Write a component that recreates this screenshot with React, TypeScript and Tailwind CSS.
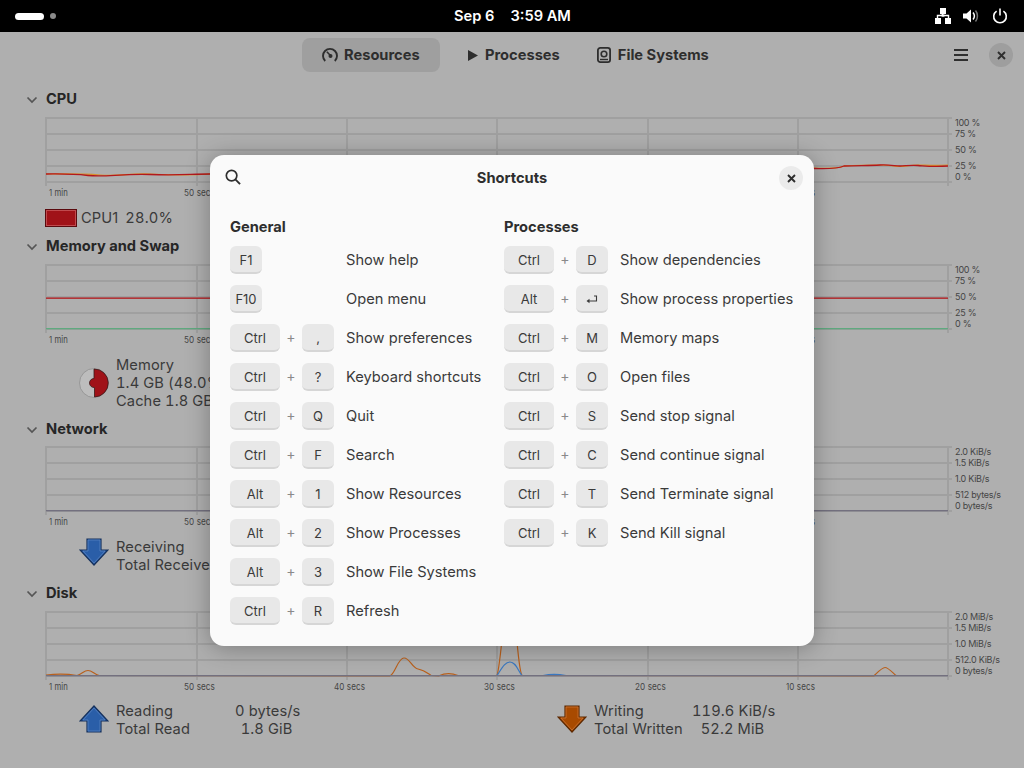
import React from "react";

const GRID = "#a0a0a0";
const VX = [46, 197, 347, 497, 648, 798, 948];
const TIMES: [number, string][] = [[49, "1 min"], [184, "50 secs"], [334, "40 secs"], [484, "30 secs"], [635, "20 secs"], [786, "10 secs"]];

function Graph({ labels, all, children }: { labels: [number, string][]; all?: boolean; children?: React.ReactNode }) {
  const times = all ? TIMES : TIMES.filter(([x]) => x < 200 || x > 700);
  return (
    <svg width={1024} height={84} viewBox="0 0 1024 84" className="block shrink-0">
      {[2, 18, 34, 50, 66].map((y) => (
        <rect key={y} x={46} y={y - 1} width={906} height={2} fill={GRID} />
      ))}
      {VX.map((x) => (
        <rect key={x} x={x - 1} y={1} width={2} height={69} fill={GRID} />
      ))}
      {children}
      {times.map(([x, t]) => (
        <text key={t} x={x} y={80} fontSize={9.5} fill="#454545" textLength={t === "1 min" ? 19 : t === "10 secs" ? 29 : 31} lengthAdjust="spacingAndGlyphs">{t}</text>
      ))}
      {labels.map(([y, t]) => (
        <text key={t} x={955} y={y + 1} fontSize={9} letterSpacing={-0.25} fill="#454545">{t}</text>
      ))}
    </svg>
  );
}

function Title({ children }: { children: React.ReactNode }) {
  return (
    <div className="flex h-[22px] items-center pl-[26px] shrink-0">
      <svg width="12" height="12" viewBox="0 0 12 12" className="mr-2 mt-[2px]">
        <path d="M1.5 3.5 L6 8 L10.5 3.5" fill="none" stroke="#555" strokeWidth="1.7" />
      </svg>
      <span className="text-[14.67px] leading-[22px] tracking-normal font-bold text-[#262626]">{children}</span>
    </div>
  );
}

function Key({ children, wide }: { children: React.ReactNode; wide?: boolean }) {
  return (
    <div className={`${wide ? "w-[50px]" : "w-8"} h-7 pt-[3px] flex items-center justify-center rounded-[6px] bg-[#e8e8e8] border-b-2 border-[#d6d6d6] text-[13px] text-[#3a3a3a] shrink-0`}>
      {children}
    </div>
  );
}

function Row({ a, b, d, single }: { a: React.ReactNode; b?: React.ReactNode; d: string; single?: boolean }) {
  return (
    <div className="flex h-7 items-center">
      {single ? (
        <div className="w-[116px] shrink-0"><Key>{a}</Key></div>
      ) : (
        <div className="w-[116px] shrink-0 flex items-center">
          <Key wide>{a}</Key>
          <span className="w-[22px] text-center text-[14px] text-[#8a8a8a] relative top-[-2px]">+</span>
          <Key>{b}</Key>
        </div>
      )}
      <span className="text-[14.67px] text-[#3a3a3a] whitespace-nowrap">{d}</span>
    </div>
  );
}

const ReturnIcon = (
  <svg width="12" height="10" viewBox="0 0 12 10">
    <path d="M10.5 1 H8 M10.5 0.5 V6 H2" fill="none" stroke="#3a3a3a" strokeWidth="1.1" />
    <path d="M0.5 6 L3.5 3.8 V8.2 Z" fill="#3a3a3a" />
  </svg>
);

function ArrowUp() {
  return (
    <svg width="30" height="28" viewBox="0 0 30 28" className="shrink-0">
      <path d="M15 1 L29 16 H22 V27 H8 V16 H1 Z" fill="#2a5ea8" stroke="#16315c" strokeWidth="1.2" />
      <path d="M15 3 L26 15 H21 V26 H9 V15 H4 Z" fill="none" stroke="#5b87c4" strokeWidth="0.7" />
    </svg>
  );
}
function ArrowDown({ fill, stroke, inner }: { fill: string; stroke: string; inner: string }) {
  return (
    <svg width="30" height="28" viewBox="0 0 30 28" className="shrink-0">
      <path d="M8 1 H22 V12 H29 L15 27 L1 12 H8 Z" fill={fill} stroke={stroke} strokeWidth="1.2" />
      <path d="M9 2 H21 V13 H26 L15 25 L4 13 H9 Z" fill="none" stroke={inner} strokeWidth="0.7" />
    </svg>
  );
}

export default function App() {
  return (
    <div className="relative w-[1024px] h-[768px] overflow-hidden bg-[#afafaf] font-['Inter',sans-serif] text-[#333]">
      {/* top bar */}
      <div className="h-8 bg-black flex items-center relative text-white">
        <div className="ml-[15px] w-[29px] h-[7px] rounded-full bg-white" />
        <div className="ml-[6px] w-[6px] h-[6px] rounded-full bg-[#8a8a8a]" />
        <div className="flex-1" />
        <svg width="16" height="16" viewBox="0 0 16 16" className="mr-3">
          <path d="M5 0h6v6H5zM0 10h6v6H0zM10 10h6v6h-6z" fill="#fff" />
          <path d="M7.3 6v2M2.5 10V7.5h11V10M7.3 7h1.4v1H7.3z" fill="none" stroke="#fff" strokeWidth="1.4" />
        </svg>
        <svg width="16" height="16" viewBox="0 0 16 16" className="mr-[13px]">
          <path d="M0 5.5h3.5L8 1.5v13L3.5 10.5H0z" fill="#fff" />
          <path d="M10 4.5c1.6 2 1.6 5 0 7" fill="none" stroke="#fff" strokeWidth="1.5" />
          <path d="M12.5 2.5c2.6 3 2.6 8 0 11" fill="none" stroke="#777" strokeWidth="1.5" />
        </svg>
        <svg width="16" height="16" viewBox="0 0 16 16" className="mr-[16px]">
          <path d="M4.6 3.2a6.3 6.3 0 1 0 6.8 0" fill="none" stroke="#fff" strokeWidth="1.6" />
          <path d="M8 0.5v7" fill="none" stroke="#fff" strokeWidth="1.6" />
        </svg>
        <div className="absolute left-[454px] top-0 h-8 flex items-center text-[14.67px] font-semibold whitespace-nowrap">
          <span>Sep 6</span>
          <span className="ml-4">3:59 AM</span>
        </div>
      </div>

      {/* header */}
      <div className="h-[46px] flex items-center pl-[302px] text-[14.67px] font-bold text-[#2e2e2e] relative">
        <div className="w-[138px] h-[34px] flex items-center pl-5 gap-[6px] rounded-lg bg-[#9f9f9f]">
          <svg width="16" height="16" viewBox="0 0 16 16">
            <path d="M3.2 14A7 7 0 1 1 12.8 14" fill="none" stroke="#2e2e2e" strokeWidth="1.9" />
            <path d="M4.8 4.8 L9 9" stroke="#2e2e2e" strokeWidth="1.6" />
            <circle cx="8.5" cy="9" r="2" fill="#2e2e2e" />
          </svg>
          <span>Resources</span>
        </div>
        <div className="ml-7 flex items-center gap-[7px]">
          <svg width="10" height="11" viewBox="0 0 10 11"><path d="M0 0 L10 5.5 L0 11 Z" fill="#2e2e2e" /></svg>
          <span>Processes</span>
        </div>
        <div className="ml-[37px] flex items-center gap-[7px]">
          <svg width="14" height="16" viewBox="0 0 14 16">
            <rect x="0.9" y="0.9" width="12.2" height="14.2" rx="2.4" fill="none" stroke="#2e2e2e" strokeWidth="1.8" />
            <circle cx="7" cy="7" r="2.8" fill="none" stroke="#2e2e2e" strokeWidth="1.6" />
            <path d="M3 12.5h8" stroke="#2e2e2e" strokeWidth="1.4" />
          </svg>
          <span>File Systems</span>
        </div>
        <svg width="14" height="12" viewBox="0 0 14 12" className="absolute left-[954px] top-[17px]">
          <path d="M0 1h14M0 6h14M0 11h14" stroke="#2e2e2e" strokeWidth="1.8" />
        </svg>
        <div className="absolute left-[989px] top-[11px] w-6 h-6 rounded-full bg-[#9e9e9e] flex items-center justify-center">
          <svg width="9" height="9" viewBox="0 0 9 9"><path d="M1 1l7 7M8 1l-7 7" stroke="#2e2e2e" strokeWidth="1.9" /></svg>
        </div>
      </div>

      {/* main content */}
      <div className="pt-[10px] flex flex-col text-[14.67px] tracking-[0.1px] text-[#3a3a3a]">
        {/* CPU */}
        <Title>CPU</Title>
        <div className="mt-[6px]">
          <Graph labels={[[9, "100 %"], [20, "75 %"], [36, "50 %"], [52, "25 %"], [63, "0 %"]]}>
            <path d="M46 58 C70 58 80 57.5 100 59 S130 57 150 58 S190 59.5 210 58 L814 52 C826 52.5 838 53 844 50 C860 49 870 49 880 49 S895 50.5 900 50.5 S910 49 918 49 S932 50 948 49" fill="none" stroke="#d8902a" strokeWidth="1.2" />
            <path d="M46 58 C60 58 70 57.5 88 59.5 S120 57.5 150 58.5 S190 58 210 58 L814 52.5 C826 53 838 52.5 844 50 C860 49.5 870 49.5 880 49 S895 50 900 50 S910 49 918 49.5 S932 51 948 50" fill="none" stroke="#b3181c" strokeWidth="1.3" />
          </Graph>
        </div>
        <div className="h-[35px] pl-[45px] flex items-start pt-[9px]">
          <div className="w-8 h-[18px] bg-[#a01218] border border-[#5a0a0e] outline outline-1 -outline-offset-2 outline-[#c04a4e] shrink-0" />
          <span className="ml-1 leading-[18px]">CPU1</span>
          <span className="ml-[7px] leading-[18px] tracking-[0.15px] tabular-nums">28.0%</span>
        </div>

        {/* Memory */}
        <Title>Memory and Swap</Title>
        <div className="mt-[6px]">
          <Graph labels={[[9, "100 %"], [20, "75 %"], [36, "50 %"], [52, "25 %"], [63, "0 %"]]}>
            <rect x={46} y={34.5} width={902} height={1.3} fill="#b3181c" />
            <rect x={46} y={65} width={902} height={1.3} fill="#5fa97f" />
          </Graph>
        </div>
        <div className="h-[71px] pl-[79px] pt-[9px] flex items-center self-start">
          <svg width="30" height="30" viewBox="0 0 30 30" className="shrink-0 mb-[9px]">
            <circle cx="15" cy="15" r="14.5" fill="#bdbdbd" stroke="#8f8f8f" strokeWidth="0.8" />
            <path d="M15 1A14 14 0 0 1 15.5 29 L15.5 19.5 A4.5 4.5 0 0 1 10.5 15 A4.5 4.5 0 0 1 15 10.5 Z" fill="#a01218" stroke="#3a1a1a" strokeWidth="0.8" />
          </svg>
          <div className="ml-[7px] leading-[18px] mb-[9px] whitespace-nowrap tabular-nums">
            <div>Memory</div>
            <div>1.4 GB (48.0%)</div>
            <div>Cache 1.8 GB</div>
          </div>
        </div>

        {/* Network */}
        <Title>Network</Title>
        <div className="mt-[5px]">
          <Graph labels={[[9, "2.0 KiB/s"], [20, "1.5 KiB/s"], [36, "1.0 KiB/s"], [52, "512 bytes/s"], [63, "0 bytes/s"]]}>
            <rect x={46} y={65} width={902} height={1.4} fill="#73707f" />
          </Graph>
        </div>
        <div className="h-[53px] pl-[79px] pt-[9px] flex items-start">
          <ArrowDown fill="#2a5ea8" stroke="#16315c" inner="#5b87c4" />
          <div className="ml-[7px] leading-[18px] whitespace-nowrap">
            <div>Receiving</div>
            <div>Total Received</div>
          </div>
        </div>

        {/* Disk */}
        <Title>Disk</Title>
        <div className="mt-[6px]">
          <Graph all labels={[[9, "2.0 MiB/s"], [20, "1.5 MiB/s"], [36, "1.0 MiB/s"], [52, "512.0 KiB/s"], [63, "0 bytes/s"]]}>
            <path d="M46 65 C60 63.5 68 64 77 65.5 C82 64 84 60.5 88 60.5 C92 60.5 94 64 99 65.5 L390 65.8 C395 64 398 48 404 48 C410 48 412 58 418 59 C424 60 426 62 431 65.5 L439 65.8 C443 64 450 62.5 458 65.5 L497 65.5 C499 60 501 40 503 20 L516 20 C518 45 520 62 522 65.5 L874 65.8 C878 62 882 57.5 885 57.5 C888 57.5 892 62 896 65.5" fill="none" stroke="#b9601c" strokeWidth="1.2" />
            <path d="M497 65.5 C502 58 505 52 510 52 C516 52 518 61 522 65.5 L543 65.5 C550 64 558 64 566 65.5" fill="none" stroke="#3a78c0" strokeWidth="1.2" />
            <rect x={46} y={65} width={902} height={1.4} fill="#73707f" />
          </Graph>
        </div>
        <div className="pt-[8px] flex items-start">
          <div className="ml-[79px] w-[478px] flex items-start shrink-0">
            <div className="mt-[3px]"><ArrowUp /></div>
            <div className="ml-[7px] w-[119px] leading-[18px]">
              <div>Reading</div>
              <div>Total Read</div>
            </div>
            <div className="w-[63px] leading-[18px] text-center whitespace-nowrap tabular-nums">
              <div>0 bytes/s</div>
              <div>1.8 GiB</div>
            </div>
          </div>
          <div className="flex items-start">
            <div className="mt-[3px]"><ArrowDown fill="#a84a00" stroke="#5c2800" inner="#d0783a" /></div>
            <div className="ml-[7px] w-[98px] leading-[18px] whitespace-nowrap">
              <div>Writing</div>
              <div>Total Written</div>
            </div>
            <div className="w-[81px] leading-[18px] text-center whitespace-nowrap tabular-nums">
              <div>119.6 KiB/s</div>
              <div>52.2 MiB</div>
            </div>
          </div>
        </div>
      </div>

      {/* dialog */}
      <div className="absolute left-[210px] top-[155px] w-[604px] h-[491px] rounded-[14px] bg-[#fafafa] shadow-[0_2px_24px_rgba(0,0,0,0.3)] text-[#2e2e2e]">
        <div className="h-[46px] relative flex items-center justify-center">
          <svg width="16" height="16" viewBox="0 0 17 17" className="absolute left-[15px] top-[14px]">
            <circle cx="7" cy="7" r="5.6" fill="none" stroke="#2e2e2e" strokeWidth="1.8" />
            <path d="M11 11l5 5" stroke="#2e2e2e" strokeWidth="2" />
          </svg>
          <span className="text-[14.67px] font-bold">Shortcuts</span>
          <div className="absolute left-[569px] top-[11px] w-6 h-6 rounded-full bg-[#ebebeb] flex items-center justify-center">
            <svg width="9" height="9" viewBox="0 0 9 9"><path d="M1 1l7 7M8 1l-7 7" stroke="#2e2e2e" strokeWidth="1.9" /></svg>
          </div>
        </div>
        <div className="flex pl-5 pt-[17px]">
          <div className="w-[274px] shrink-0">
            <div className="h-[18px] mb-[10px] text-[14.67px] leading-[18px] font-bold">General</div>
            <div className="flex flex-col gap-[11px]">
              <Row single a="F1" d="Show help" />
              <Row single a="F10" d="Open menu" />
              <Row a="Ctrl" b="," d="Show preferences" />
              <Row a="Ctrl" b="?" d="Keyboard shortcuts" />
              <Row a="Ctrl" b="Q" d="Quit" />
              <Row a="Ctrl" b="F" d="Search" />
              <Row a="Alt" b="1" d="Show Resources" />
              <Row a="Alt" b="2" d="Show Processes" />
              <Row a="Alt" b="3" d="Show File Systems" />
              <Row a="Ctrl" b="R" d="Refresh" />
            </div>
          </div>
          <div>
            <div className="h-[18px] mb-[10px] text-[14.67px] leading-[18px] font-bold">Processes</div>
            <div className="flex flex-col gap-[11px]">
              <Row a="Ctrl" b="D" d="Show dependencies" />
              <Row a="Alt" b={ReturnIcon} d="Show process properties" />
              <Row a="Ctrl" b="M" d="Memory maps" />
              <Row a="Ctrl" b="O" d="Open files" />
              <Row a="Ctrl" b="S" d="Send stop signal" />
              <Row a="Ctrl" b="C" d="Send continue signal" />
              <Row a="Ctrl" b="T" d="Send Terminate signal" />
              <Row a="Ctrl" b="K" d="Send Kill signal" />
            </div>
          </div>
        </div>
      </div>
    </div>
  );
}
